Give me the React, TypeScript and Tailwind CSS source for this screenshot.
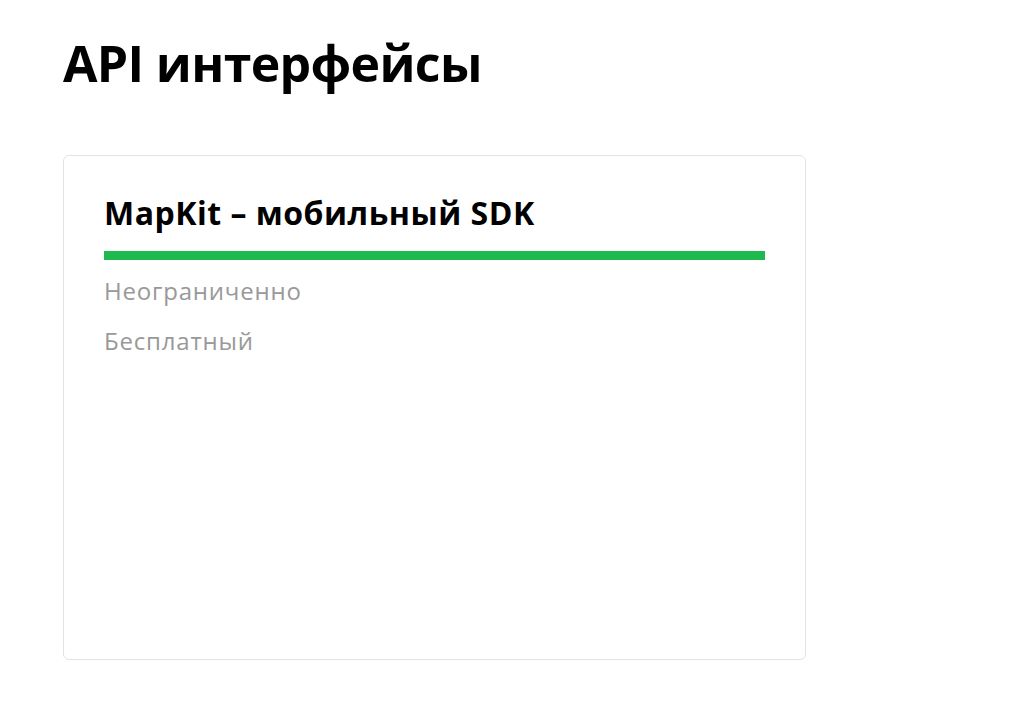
export default function App() {
  return (
    <div className="min-h-[721px] w-full bg-white" style={{ fontFamily: '"Open Sans", "Noto Sans", sans-serif' }}>
      <div className="px-[63px] pt-[28px]">
        <h1 className="text-[50px] font-bold leading-[70px] text-black tracking-[-0.65px]">API интерфейсы</h1>
        <div className="mt-[57px] flex h-[505px] w-[743px] flex-col rounded-[6px] border border-[#e3e3e3] px-[40px] pt-[34px]">
          <h2 className="text-[32px] font-bold leading-[46px] text-black tracking-[0.5px]">MapKit – мобильный SDK</h2>
          <div className="mt-[15px] h-[9px] w-full bg-[#1fba4d]" />
          <div className="mt-[14px] text-[24px] leading-[34px] text-[#999999] tracking-[0.8px]">Неограниченно</div>
          <div className="mt-[16px] text-[24px] leading-[34px] text-[#999999] tracking-[0.8px]">Бесплатный</div>
        </div>
      </div>
    </div>
  );
}
